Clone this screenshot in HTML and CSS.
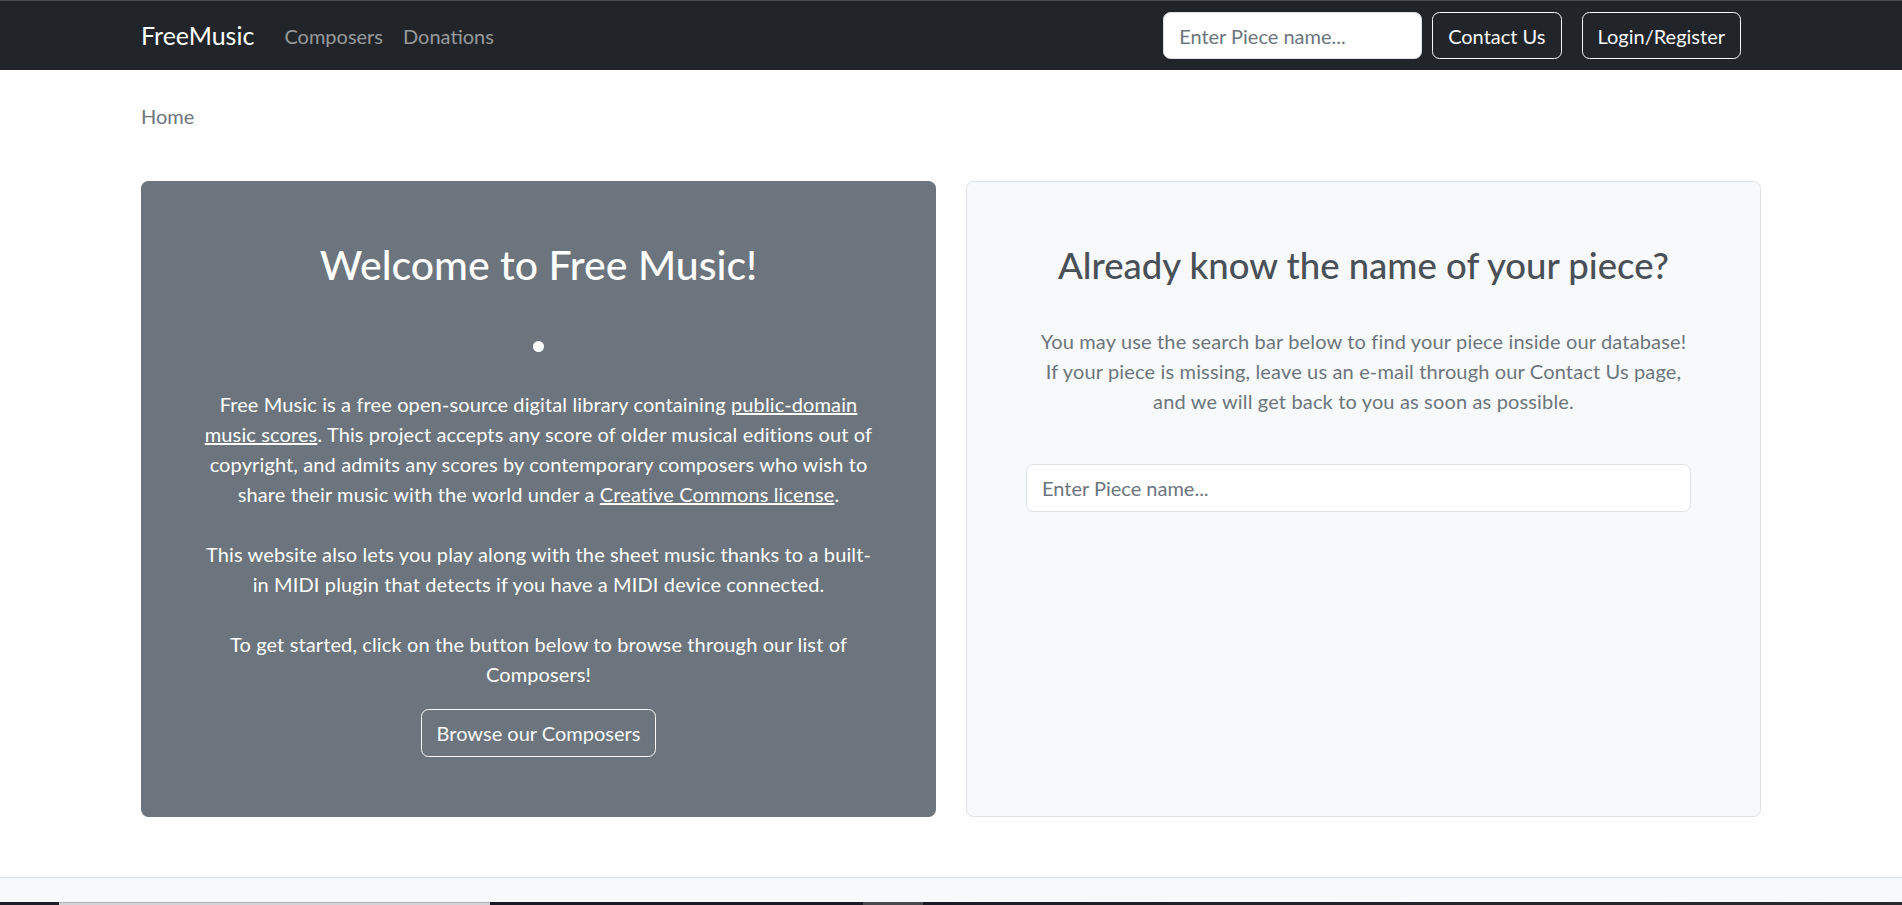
FILE: index.html
```html
<!DOCTYPE html>
<html lang="en">
<head>
<meta charset="utf-8">
<title>FreeMusic</title>
<link rel="stylesheet" href="styles.css">
</head>
<body>
<nav class="navbar">
  <div class="nav-inner">
    <a class="brand" href="#">FreeMusic</a>
    <ul class="nav-links">
      <li><a href="#">Composers</a></li>
      <li><a href="#">Donations</a></li>
    </ul>
    <div class="nav-right">
      <input class="search nav-search" type="text" placeholder="Enter Piece name...">
      <button class="btn btn-outline">Contact Us</button>
      <button class="btn btn-outline btn-login">Login/Register</button>
    </div>
  </div>
</nav>

<main class="container">
  <div class="breadcrumb">Home</div>
  <div class="row">
    <section class="card card-dark">
      <h2 class="card-title title-welcome">Welcome to Free Music!</h2>
      <div class="dot"></div>
      <p class="txt">Free Music is a free open-source digital library containing <a href="#">public-domain music scores</a>. This project accepts any score of older musical editions out of copyright, and admits any scores by contemporary composers who wish to share their music with the world under a <a href="#">Creative Commons license</a>.</p>
      <p class="txt">This website also lets you play along with the sheet music thanks to a built-in MIDI plugin that detects if you have a MIDI device connected.</p>
      <p class="txt txt-last">To get started, click on the button below to browse through our list of Composers!</p>
      <button class="btn btn-outline btn-browse">Browse our Composers</button>
    </section>
    <section class="card card-light">
      <h2 class="card-title title-dark">Already know the name of your piece?</h2>
      <p class="txt txt-muted">You may use the search bar below to find your piece inside our database!<br>If your piece is missing, leave us an e-mail through our Contact Us page,<br>and we will get back to you as soon as possible.</p>
      <input class="search card-search" type="text" placeholder="Enter Piece name...">
    </section>
  </div>
</main>

<footer class="footer"></footer>

<div class="taskbar">
  <span class="tb tb-dark1"></span>
  <span class="tb tb-light"></span>
  <span class="tb tb-dark2"></span>
  <span class="tb tb-gray"></span>
  <span class="tb tb-dark3"></span>
</div>
</body>
</html>
```

FILE: styles.css
```css
* { box-sizing: border-box; }

html, body {
  margin: 0;
  padding: 0;
}

body {
  font-family: Lato, "Open Sans", "Liberation Sans", sans-serif;
  font-size: 20px;
  line-height: 30px;
  color: #212529;
  background: #fff;
}

a { color: inherit; }

/* Navbar */
.navbar {
  background: #212529;
  border-top: 1px solid #4a4b4d;
  height: 70px;
}

.nav-inner {
  width: 1650px;
  margin: 0 auto;
  padding: 0 15px;
  height: 100%;
  display: flex;
  align-items: center;
}

.brand {
  font-size: 25px;
  line-height: 37px;
  color: #fff;
  text-decoration: none;
  margin-right: 20px;
}

.nav-links {
  list-style: none;
  margin: 0;
  padding: 0;
  display: flex;
}

.nav-links a {
  display: block;
  padding: 10px 10px;
  color: rgba(255, 255, 255, 0.55);
  text-decoration: none;
}

.nav-right {
  margin-left: auto;
  margin-right: 20px;
  display: flex;
  align-items: center;
}

.search {
  font-family: inherit;
  font-size: 20px;
  line-height: 30px;
  height: 47.5px;
  padding: 7.5px 15px;
  border: 1.25px solid #dee2e6;
  border-radius: 7.5px;
  background: #fff;
  color: #212529;
  outline: none;
}

.search::placeholder { color: #6c757d; opacity: 1; }

.nav-search {
  width: 259px;
  margin-right: 10px;
}

.btn {
  font-family: inherit;
  font-size: 20px;
  line-height: 30px;
  height: 47.5px;
  padding: 7.5px 15px;
  border-radius: 7.5px;
  cursor: pointer;
  background: transparent;
}

.btn-outline {
  color: #f8f9fa;
  border: 1.25px solid #f8f9fa;
}

.btn-login { margin-left: 20px; }

/* Main */
.container {
  width: 1650px;
  margin: 0 auto;
  padding: 31px 15px 0;
}

.breadcrumb {
  color: #6c757d;
  margin-bottom: 50px;
}

.row {
  display: flex;
  gap: 30px;
  margin-bottom: 60px;
}

.card {
  flex: 1 1 0;
  border-radius: 7.5px;
  padding: 60px;
  text-align: center;
}

.card-dark {
  background: #6c757d;
  color: #fff;
}

.card-light {
  background: #f8f9fa;
  border: 1px solid #dee2e6;
  padding: 59px;
}

.card-title {
  font-size: 40px;
  line-height: 48px;
  font-weight: 500;
  margin: 0 0 10px;
}

.title-welcome { font-size: 41px; }

.card-light .card-title {
  font-size: 36.5px;
  margin-bottom: 37px;
}

.title-dark { color: #495057; }

.dot {
  width: 11px;
  height: 11px;
  border-radius: 50%;
  background: #fff;
  margin: 52px auto 37px;
}

.txt {
  margin: 0 0 30px;
  letter-spacing: 0.12px;
}

.txt-last { margin-bottom: 20px; }

.txt-muted {
  color: #6c757d;
  margin-bottom: 48px;
  letter-spacing: 0.15px;
}

.card-search {
  display: block;
  width: calc(100% - 10px);
}

/* Footer */
.footer {
  background: #f8f9fa;
  border-top: 1px solid #dee2e6;
  height: 60px;
}

.taskbar {
  position: fixed;
  left: 0;
  right: 0;
  bottom: 0;
  height: 3px;
  display: flex;
}

.tb { display: block; height: 100%; }
.tb-dark1 { width: 59px; background: #1d1e26; }
.tb-light { width: 431px; background: #d4d4d6; border-top: 1px solid #b0b0b2; }
.tb-dark2 { width: 373px; background: #1a1b24; }
.tb-gray { width: 60px; background: #4a4a4e; }
.tb-dark3 { flex: 1; background: linear-gradient(90deg, #1c1c24, #2b2b2e); }
```
